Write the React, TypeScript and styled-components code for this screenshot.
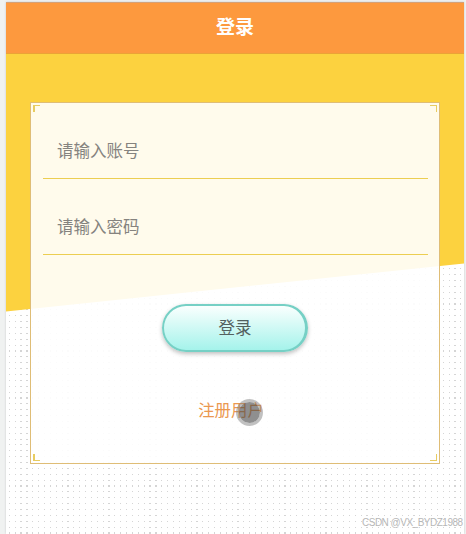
import React from "react";
import styled, { createGlobalStyle } from "styled-components";

const Global = createGlobalStyle`
  * { box-sizing: border-box; }
  body {
    margin: 0;
    background: #f0f2f1;
    overflow: hidden;
    font-family: "Noto Sans CJK SC", "Noto Sans", sans-serif;
  }
`;

const Phone = styled.main`
  position: relative;
  width: 458px;
  height: 532px;
  margin: 2px 0 0 6px;
  background: #fff;
  box-shadow: 0 0 2px #c8cacb;
  overflow: hidden;
`;

const Backdrop = styled.svg`
  position: absolute;
  inset: 0;
  width: 458px;
  height: 532px;
`;

const Header = styled.header`
  position: relative;
  height: 52px;
  display: flex;
  align-items: center;
  justify-content: center;
  background: #fd993e;
  border-top: 1px solid #d6a177;
  border-bottom: 1px solid #eba336;
`;

const Title = styled.h1`
  margin: 0;
  padding-bottom: 4px;
  color: #fff;
  font-size: 19px;
  line-height: 28px;
  font-weight: 700;
`;

const Card = styled.form`
  position: relative;
  width: 410px;
  height: 362px;
  margin: 48px 0 0 24px;
  padding: 20px 11px 0 12px;
  display: flex;
  flex-direction: column;
  align-items: center;
  background: rgba(255, 255, 255, 0.9);
  border: 1px solid #dfbd76;
`;

const Corner = styled.i<{ $v: "top" | "bottom"; $h: "left" | "right" }>`
  position: absolute;
  ${(p) => p.$v}: 2px;
  ${(p) => p.$h}: 2px;
  width: 7px;
  height: 7px;
  border: 0 solid #e8cc61;
  border-${(p) => p.$v}-width: 1px;
  border-${(p) => p.$h}-width: ${(p) => (p.$h === "left" ? 2 : 1)}px;
`;

const Field = styled.input`
  display: block;
  width: 100%;
  height: 56px;
  margin-bottom: 20px;
  padding: 0 14px 2px;
  border: 0;
  border-bottom: 1px solid #ecce51;
  border-radius: 0;
  outline: 0;
  background: transparent;
  color: #777;
  font: 400 16.5px "Noto Sans CJK SC", sans-serif;
  &::placeholder {
    color: #85837f;
    opacity: 1;
  }
`;

const Submit = styled.button`
  flex: none;
  width: 146px;
  height: 48px;
  margin: 29px 2px 0 0;
  padding: 0 0 2px 2px;
  border: 2px solid #76d0c5;
  border-width: 2px 3px 2px 2px;
  border-radius: 24px;
  background: linear-gradient(#fafffe, #a5f3eb);
  box-shadow: 0 2px 4px rgba(0, 0, 0, 0.25);
  color: #53615f;
  font: 400 16.5px "Noto Sans CJK SC", sans-serif;
`;

const Register = styled.a`
  margin: 44px 9px 0 0;
  color: #eb9850;
  font-size: 16.4px;
  line-height: 26px;
`;

const Pointer = styled.span`
  position: absolute;
  left: 230px;
  top: 397px;
  width: 27px;
  height: 27px;
  border: 3px solid rgba(125, 125, 125, 0.48);
  border-radius: 50%;
  background: rgba(75, 75, 75, 0.62);
  background-clip: padding-box;
`;

const Watermark = styled.span`
  position: absolute;
  left: 356px;
  top: 514px;
  color: #b7b7b7;
  font: 10px/13px "Liberation Sans", sans-serif;
  letter-spacing: -0.5px;
  white-space: nowrap;
`;

type Dot = { at: number; size: number };

function dots(origin: number, step: number, from: number, to: number, wide: number): Dot[] {
  const list: Dot[] = [];
  for (let i = from; i <= to; i++) {
    const pos = origin + step * i;
    list.push(
      pos - Math.floor(pos) < wide
        ? { at: Math.floor(pos), size: 2 }
        : { at: Math.ceil(pos), size: 1 }
    );
  }
  return list;
}

const columns = dots(20, 5.864, -3, 74, 0.15);
const rows = dots(348.05, 5.871, -16, 31, 0.1);

export default function App() {
  return (
    <>
      <Global />
      <Phone>
        <Backdrop aria-hidden="true">
          <g fill="#d5d5d5" shapeRendering="crispEdges">
            {rows.map((r) =>
              columns.map((c) => (
                <rect key={`${c.at}-${r.at}`} x={c.at} y={r.at} width={c.size} height={r.size} />
              ))
            )}
          </g>
          <path d="M0 52H458V261.5L0 309.5Z" fill="#fcd23f" />
        </Backdrop>
        <Header>
          <Title>登录</Title>
        </Header>
        <Card onSubmit={(e) => e.preventDefault()}>
          <Corner $v="top" $h="left" />
          <Corner $v="top" $h="right" />
          <Corner $v="bottom" $h="left" />
          <Corner $v="bottom" $h="right" />
          <Field placeholder="请输入账号" />
          <Field type="password" placeholder="请输入密码" />
          <Submit>登录</Submit>
          <Register>注册用户</Register>
        </Card>
        <Pointer />
        <Watermark>CSDN @VX_BYDZ1988</Watermark>
      </Phone>
    </>
  );
}
